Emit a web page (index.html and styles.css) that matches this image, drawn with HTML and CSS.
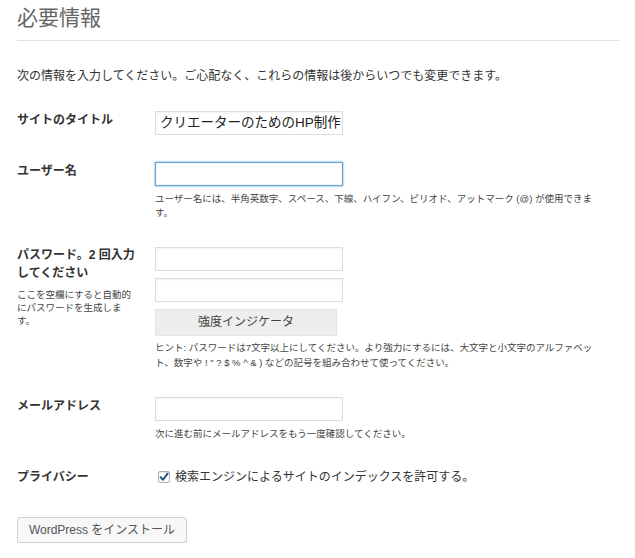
FILE: index.html
```html
<!DOCTYPE html>
<html lang="ja">
<head>
<meta charset="utf-8">
<title>必要情報</title>
<link rel="stylesheet" href="styles.css">
</head>
<body>
<div class="page">
  <h1 class="title">必要情報</h1>
  <p class="intro">次の情報を入力してください。ご心配なく、これらの情報は後からいつでも変更できます。</p>

  <form class="form-table">
    <div class="row">
      <div class="label">サイトのタイトル</div>
      <div class="field">
        <div class="input filled">クリエーターのためのHP制作</div>
      </div>
    </div>

    <div class="row">
      <div class="label">ユーザー名</div>
      <div class="field">
        <div class="input focused"></div>
        <p class="desc">ユーザー名には、半角英数字、スペース、下線、ハイフン、ピリオド、アットマーク (@) が使用できます。</p>
      </div>
    </div>

    <div class="row">
      <div class="label-col">
        <div class="label two">パスワード。2 回入力してください</div>
        <p class="label-desc">ここを空欄にすると自動的にパスワードを生成します。</p>
      </div>
      <div class="field">
        <div class="input"></div>
        <div class="input second"></div>
        <div class="strength">強度インジケータ</div>
        <p class="hint">ヒント: パスワードは7文字以上にしてください。より強力にするには、大文字と小文字のアルファベット、数字や ! " ? $ % ^ &amp; ) などの記号を組み合わせて使ってください。</p>
      </div>
    </div>

    <div class="row">
      <div class="label">メールアドレス</div>
      <div class="field">
        <div class="input"></div>
        <p class="desc">次に進む前にメールアドレスをもう一度確認してください。</p>
      </div>
    </div>

    <div class="row">
      <div class="label">プライバシー</div>
      <div class="field check-line">
        <span class="checkbox"><svg viewBox="0 0 12 12" width="12" height="12"><path d="M2.6 6.2 L5 8.8 L9.6 2.6" fill="none" stroke="#1f4f82" stroke-width="1.9" stroke-linecap="round" stroke-linejoin="round"/></svg></span>
        <span class="check-text">検索エンジンによるサイトのインデックスを許可する。</span>
      </div>
    </div>
  </form>

  <div class="actions">
    <span class="button">WordPress をインストール</span>
  </div>
</div>
</body>
</html>
```

FILE: styles.css
```css
html, body {
  margin: 0;
  padding: 0;
  background: #fff;
}

body {
  font-family: "Liberation Sans", "Noto Sans CJK JP", sans-serif;
  color: #444;
}

.page {
  padding: 0 15px 0 17px;
}

.title {
  margin: 0;
  padding: 4px 0 8px;
  font-size: 21px;
  line-height: 28px;
  font-weight: normal;
  color: #666;
  border-bottom: 1px solid #e2e2e2;
}

.intro {
  margin: 26px 0 0;
  font-size: 12px;
  line-height: 18px;
  color: #333;
}

.form-table {
  display: flex;
  flex-direction: column;
  gap: 27px;
  margin-top: 26px;
}

.row {
  display: grid;
  grid-template-columns: 138px 440px;
  align-items: start;
}

.label {
  font-size: 12px;
  line-height: 18px;
  font-weight: bold;
  color: #333;
}

.label.two {
  width: 122px;
  margin-top: -1px;
}

.label-desc {
  width: 116px;
  margin: 6px 0 0;
  font-size: 9.5px;
  line-height: 13px;
  color: #444;
}

.field {
  display: flex;
  flex-direction: column;
  align-items: flex-start;
}

.input {
  box-sizing: border-box;
  width: 188px;
  height: 24px;
  border: 1px solid #dcdcdc;
  box-shadow: inset 0 1px 2px rgba(0, 0, 0, 0.05);
  background: #fff;
  padding: 0 5px;
  font-size: 13.5px;
  line-height: 22px;
  color: #222;
  white-space: nowrap;
  overflow: hidden;
}

.input.filled {
  padding-left: 4px;
}

.input.focused {
  border-color: #6ea4d8;
  box-shadow: 0 0 2px rgba(30, 140, 190, 0.8), inset 0 0 1px rgba(30, 140, 190, 0.6);
}

.input.second {
  margin-top: 7px;
}

.strength {
  box-sizing: border-box;
  margin-top: 7px;
  width: 182px;
  height: 27px;
  background: #eee;
  border: 1px solid #e4e4e4;
  font-size: 12px;
  line-height: 25px;
  text-align: center;
  color: #444;
}

.desc {
  margin: 6px 0 0;
  font-size: 9.5px;
  line-height: 14px;
  color: #444;
}

.hint {
  margin: 4px 0 0;
  font-size: 9.5px;
  line-height: 15px;
  color: #444;
}

.check-line {
  flex-direction: row;
  align-items: center;
  height: 18px;
}

.checkbox {
  box-sizing: border-box;
  display: inline-flex;
  width: 12px;
  height: 12px;
  margin-left: 3px;
  margin-right: 5px;
  border: 1px solid #a9adb2;
  border-radius: 2px;
  background: #fff;
  box-shadow: inset 0 1px 1px rgba(0, 0, 0, 0.1);
  align-items: center;
  justify-content: center;
  overflow: visible;
}

.checkbox svg {
  display: block;
  margin: -1px;
}

.check-text {
  font-size: 12px;
  line-height: 18px;
  color: #333;
}

.actions {
  margin-top: 31px;
}

.button {
  box-sizing: border-box;
  display: inline-block;
  width: 170px;
  height: 26px;
  border: 1px solid #cfcfcf;
  border-radius: 3px;
  background: #f7f7f7;
  box-shadow: 0 1px 0 #e0e0e0;
  font-size: 12px;
  line-height: 24px;
  text-align: center;
  color: #555;
}
```
